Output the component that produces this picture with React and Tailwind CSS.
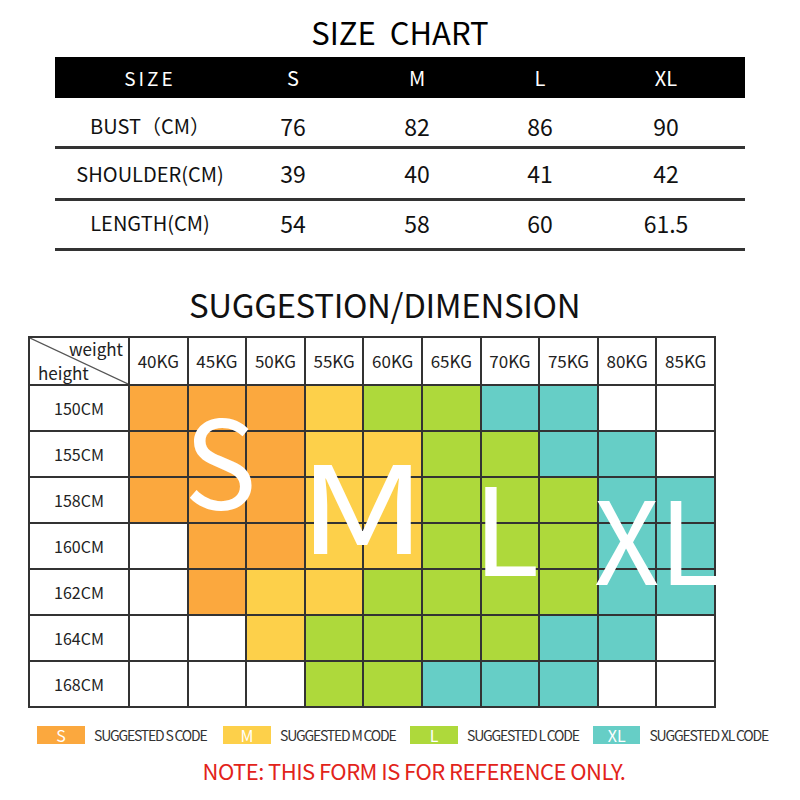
import React from 'react';

const cjk = { fontFamily: "'Noto Sans CJK SC','Noto Sans',sans-serif" };

const sizeRows = [
  { label: 'BUST（CM）', values: ['76', '82', '86', '90'] },
  { label: 'SHOULDER(CM)', values: ['39', '40', '41', '42'] },
  { label: 'LENGTH(CM)', values: ['54', '58', '60', '61.5'] },
];

const weights = ['40KG', '45KG', '50KG', '55KG', '60KG', '65KG', '70KG', '75KG', '80KG', '85KG'];

// O = S, Y = M, G = L, T = XL, W = none
const fills = {
  O: 'bg-[#fba83e]',
  Y: 'bg-[#fdd04a]',
  G: 'bg-[#aed93b]',
  T: 'bg-[#66cec6]',
  W: 'bg-white',
};

const grid = [
  { h: '150CM', c: 'OOOYGGTTWW' },
  { h: '155CM', c: 'OOOYYGGTTW' },
  { h: '158CM', c: 'OOOYYGGGTT' },
  { h: '160CM', c: 'WOOYYGGGTT' },
  { h: '162CM', c: 'WOYYGGGGTT' },
  { h: '164CM', c: 'WWYGGGGTTW' },
  { h: '168CM', c: 'WWWGGTTTWW' },
];

const legend = [
  { tag: 'S', text: 'SUGGESTED S CODE', color: 'bg-[#fba83e]', w: 'w-[186px]' },
  { tag: 'M', text: 'SUGGESTED M CODE', color: 'bg-[#fdd04a]', w: 'w-[187px]' },
  { tag: 'L', text: 'SUGGESTED L CODE', color: 'bg-[#aed93b]', w: 'w-[183px]' },
  { tag: 'XL', text: 'SUGGESTED XL CODE', color: 'bg-[#66cec6]', w: 'w-[175px]' },
];

function SizeChart() {
  return (
    <div className="flex flex-col items-center" style={cjk}>
      <h1 className="text-[31px] leading-none text-black pt-[16px] h-[57px] whitespace-pre">
        SIZE  CHART
      </h1>
      <div className="w-[690px]">
        <div className="grid grid-cols-[190px_96px_152px_94px_158px] items-center h-[41px] bg-black text-white text-[20px] leading-none">
          <span className="text-center tracking-[3px] text-[19px]">SIZE</span>
          <span className="text-center">S</span>
          <span className="text-center">M</span>
          <span className="text-center">L</span>
          <span className="text-center">XL</span>
        </div>
        {sizeRows.map((row, r) => (
          <div
            key={row.label}
            className={`grid grid-cols-[190px_96px_152px_94px_158px] items-center border-b-[3px] border-[#333] text-[#111] leading-none ${
              r === 0 ? 'h-[51px] pt-[8px]' : r === 1 ? 'h-[52px]' : 'h-[50px] pb-[3px]'
            }`}
          >
            <span className="text-center text-[20px]">{row.label}</span>
            {row.values.map((v, i) => (
              <span key={i} className="text-center text-[23px]">{v}</span>
            ))}
          </div>
        ))}
      </div>
    </div>
  );
}

function Suggestion() {
  return (
    <div className="flex flex-col mt-[35px]" style={cjk}>
      <h2 className="ml-[189px] text-[33px] leading-none text-[#111] h-[50px] pt-[2px] tracking-[-0.35px]">
        SUGGESTION/DIMENSION
      </h2>
      <div className="relative ml-[28px] w-[688px]">
        <div className="grid grid-cols-[98px_repeat(10,1fr)] grid-rows-[46px_repeat(7,44px)] gap-[2px] p-[2px] bg-[#333] text-[17px] text-[#222]">
          <div className="relative bg-white">
            <svg className="absolute inset-0 w-full h-full" viewBox="0 0 98 46" preserveAspectRatio="none">
              <line x1="0" y1="0" x2="98" y2="46" stroke="#555" strokeWidth="1.2" />
            </svg>
            <span className="absolute right-[5px] top-0 text-[17px] leading-[22px]">weight</span>
            <span className="absolute left-[8px] bottom-0 text-[17px] leading-[22px]">height</span>
          </div>
          {weights.map(w => (
            <div key={w} className="bg-white flex items-center justify-center">{w}</div>
          ))}
          {grid.map(row => (
            <React.Fragment key={row.h}>
              <div className="bg-white flex items-center justify-center text-[16px]">{row.h}</div>
              {row.c.split('').map((k, i) => (
                <div key={i} className={fills[k]} />
              ))}
            </React.Fragment>
          ))}
        </div>
        <span className="absolute left-[156px] top-[59px] text-[122px] leading-none text-white pointer-events-none">S</span>
        <span className="absolute left-[270px] top-[104px] text-[122px] leading-none text-white pointer-events-none origin-left scale-x-[1.3]">M</span>
        <span className="absolute left-[445px] top-[126px] text-[122px] leading-none text-white pointer-events-none">L</span>
        <span className="absolute left-[566px] top-[143px] text-[114px] leading-none text-white pointer-events-none">XL</span>
      </div>
    </div>
  );
}

function Legend() {
  return (
    <div className="flex items-center ml-[37px] mt-[18px]" style={cjk}>
      {legend.map(item => (
        <div key={item.tag} className={`flex items-center ${item.w}`}>
          <div className={`${item.color} w-[48px] h-[18px] flex items-center justify-center text-white text-[16px] leading-none`}>
            {item.tag}
          </div>
          <span className="ml-[9px] text-[14px] leading-none text-[#333] tracking-[-1.2px] whitespace-nowrap">
            {item.text}
          </span>
        </div>
      ))}
    </div>
  );
}

export default function App() {
  return (
    <div className="w-[800px] h-[800px] bg-white overflow-hidden">
      <SizeChart />
      <Suggestion />
      <Legend />
      <p
        className="text-center pl-[28px] mt-[15px] text-[22px] text-[#e2231a] leading-none tracking-[-0.55px]"
        style={cjk}
      >
        NOTE: THIS FORM IS FOR REFERENCE ONLY.
      </p>
    </div>
  );
}
